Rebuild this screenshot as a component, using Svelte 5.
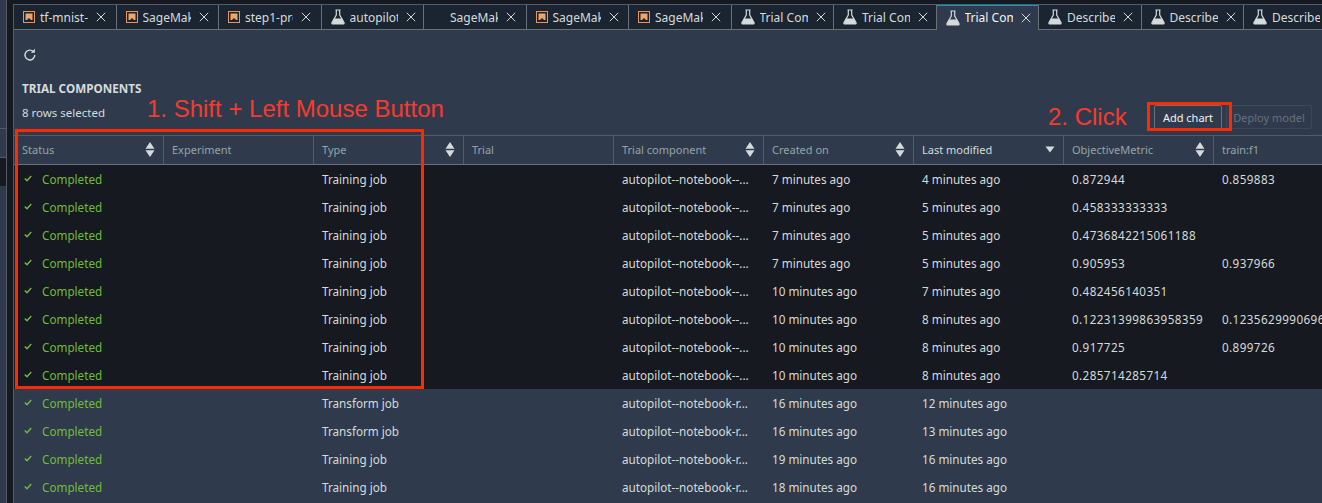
<script lang="ts">
  type Tab = { name: string; icon: "" | "sm" | "flask"; active?: boolean };
  const tabs: Tab[] = [
    { name: "tf-mnist-", icon: "sm" },
    { name: "SageMaker", icon: "sm" },
    { name: "step1-prepare", icon: "sm" },
    { name: "autopilot", icon: "flask" },
    { name: "SageMaker", icon: "" },
    { name: "SageMaker", icon: "sm" },
    { name: "SageMaker", icon: "sm" },
    { name: "Trial Component", icon: "flask" },
    { name: "Trial Component", icon: "flask" },
    { name: "Trial Component", icon: "flask", active: true },
    { name: "Describe", icon: "flask" },
    { name: "Describe", icon: "flask" },
    { name: "Describe", icon: "flask" },
  ];

  const cols = [
    { k: "Status", sort: "both" },
    { k: "Experiment", sort: "" },
    { k: "Type", sort: "both" },
    { k: "Trial", sort: "" },
    { k: "Trial component", sort: "both" },
    { k: "Created on", sort: "both" },
    { k: "Last modified", sort: "down" },
    { k: "ObjectiveMetric", sort: "both" },
    { k: "train:f1", sort: "" },
  ];

  const sel = "autopilot--notebook--...";
  const rest = "autopilot--notebook-r...";
  const rows = [
    ["Training job", sel, "7 minutes ago", "4 minutes ago", "0.872944", "0.859883", true],
    ["Training job", sel, "7 minutes ago", "5 minutes ago", "0.458333333333", "", true],
    ["Training job", sel, "7 minutes ago", "5 minutes ago", "0.4736842215061188", "", true],
    ["Training job", sel, "7 minutes ago", "5 minutes ago", "0.905953", "0.937966", true],
    ["Training job", sel, "10 minutes ago", "7 minutes ago", "0.482456140351", "", true],
    ["Training job", sel, "10 minutes ago", "8 minutes ago", "0.12231399863958359", "0.12356299906969", true],
    ["Training job", sel, "10 minutes ago", "8 minutes ago", "0.917725", "0.899726", true],
    ["Training job", sel, "10 minutes ago", "8 minutes ago", "0.285714285714", "", true],
    ["Transform job", rest, "16 minutes ago", "12 minutes ago", "", "", false],
    ["Transform job", rest, "16 minutes ago", "13 minutes ago", "", "", false],
    ["Training job", rest, "19 minutes ago", "16 minutes ago", "", "", false],
    ["Training job", rest, "18 minutes ago", "16 minutes ago", "", "", false],
  ];
</script>

<div class="page">
  <div class="strip">
    <div class="strip-head"></div>
    <div class="strip-row"></div>
  </div>
  <div class="gutter"></div>
  <div class="main">
    <div class="tabs">
      {#each tabs as t, i (i)}
        <div class="tab" class:active={t.active}>
          {#if t.icon === "sm"}
            <svg class="ic" width="12" height="12" viewBox="0 0 12 12">
              <rect x="0.5" y="0.5" width="11" height="11" fill="none" stroke="#e8935a" />
              <path d="M2.5 2.5h7v6.5h-1.6l-1-1.6h-1.8l-1 1.6H2.500z" fill="#f0a468" />
            </svg>
          {:else if t.icon === "flask"}
            <svg class="ic" width="14" height="16" viewBox="0 0 14 16">
              <path d="M4.500 1h5M5.300 1v5L1 13.500q-.5 1.500 1 1.500h10q1.500 0 1-1.500L8.700 6V1" fill="none" stroke="#d5dbdb" stroke-width="1.200" />
              <path d="M3.300 9.500h7.400l2.300 4.500q0 1-1 1H2q-1 0-1-1z" fill="#d5dbdb" />
            </svg>
          {:else}
            <span class="noic"></span>
          {/if}
          <span class="name">{t.name}</span>
          <svg class="x" width="10" height="10" viewBox="0 0 10 10">
            <path d="M.8.8l8.400 8.400M9.200.8L.8 9.200" stroke="#d5dbdb" stroke-width="1" fill="none" />
          </svg>
        </div>
      {/each}
    </div>

    <div class="toolbar">
      <svg width="14" height="14" viewBox="0 0 14 14">
        <path d="M11.800 7a4.900 4.900 0 1 1-1.500-3.500" fill="none" stroke="#d5dbdb" stroke-width="1.400" />
        <path d="M11.900 .8v4h-4z" fill="#d5dbdb" />
      </svg>
    </div>

    <div class="head">
      <div>
        <div class="title">TRIAL COMPONENTS</div>
        <div class="count">8 rows selected</div>
      </div>
      <div class="actions">
        <button class="btn">Add chart</button>
        <button class="btn off">Deploy model</button>
      </div>
    </div>

    <div class="thead">
      {#each cols as c (c.k)}
        <div class="th" class:on={c.k === "Last modified"}>
          <span>{c.k}</span>
          {#if c.sort === "both"}
            <svg width="10" height="15" viewBox="0 0 10 15">
              <path d="M5 0l4.500 6.800H.5zM5 15L.5 8.200h9z" fill="#d5dbdb" />
            </svg>
          {:else if c.sort === "down"}
            <svg width="10" height="7" viewBox="0 0 10 7"><path d="M.5 .5h9L5 6.500z" fill="#d5dbdb" /></svg>
          {/if}
        </div>
      {/each}
    </div>

    {#each rows as r, i (i)}
      <div class="tr" class:selected={r[6]}>
        <div class="td status">
          <svg width="8" height="7" viewBox="0 0 8 7"><path d="M.8 3.500l2.200 2.200L7.200 1" fill="none" stroke="#6fbb3c" stroke-width="1.500" /></svg>
          <span>Completed</span>
        </div>
        <div class="td"></div>
        <div class="td">{r[0]}</div>
        <div class="td"></div>
        <div class="td">{r[1]}</div>
        <div class="td">{r[2]}</div>
        <div class="td">{r[3]}</div>
        <div class="td num">{r[4]}</div>
        <div class="td num">{r[5]}</div>
      </div>
    {/each}
  </div>

  <!-- аннотации поверх скриншота -->
  <div class="mark m1"></div>
  <div class="mark m2"></div>
  <div class="note n1">1. Shift + Left Mouse Button</div>
  <div class="note n2">2. Click</div>
</div>

<style>
  :global(body) {
    margin: 0;
    background: #16191f;
  }
  .page {
    position: relative;
    display: flex;
    width: 1322px;
    height: 503px;
    overflow: hidden;
    background: #16191f;
    font-family: "Noto Sans", "Open Sans", sans-serif;
    font-size: 11px;
    color: #d5dbdb;
  }
  .strip {
    width: 6px;
    flex: none;
    background: #2f3b4c;
    border-right: 1px solid #545b64;
  }
  .strip-head {
    box-sizing: border-box;
    margin-top: 128px;
    height: 30px;
    border-top: 1px solid #545b64;
    border-bottom: 1px solid #545b64;
  }
  .strip-row {
    height: 28px;
    background: #16191f;
  }
  .gutter {
    width: 6px;
    flex: none;
  }
  .main {
    flex: none;
    width: 1309px;
    margin-top: 4px;
    border-left: 1px solid #545b64;
    background: #2f3b4c;
  }
  .tabs {
    display: grid;
    grid-template-columns: repeat(13, 102.5px);
    box-sizing: border-box;
    height: 26px;
    border-top: 1px solid #545b64;
    border-bottom: 1px solid #687078;
    background: #1b2531;
  }
  .tab {
    display: flex;
    align-items: center;
    box-sizing: border-box;
    height: 24px;
    padding-left: 9px;
    border-right: 1px solid #687078;
    font-size: 12px;
    overflow: hidden;
    position: relative;
  }
  .tab.active {
    background: #2f3b4c;
    color: #f2f3f3;
    height: 25px;
    box-shadow: inset 0 1px 0 #00a1c9;
    border-left: 1px solid #687078;
    margin-left: -1px;
  }
  .ic {
    flex: none;
    margin-right: 5px;
  }
  .noic {
    flex: none;
    width: 17px;
  }
  .name {
    flex: none;
    width: 48px;
    overflow: hidden;
    white-space: nowrap;
  }
  .x {
    flex: none;
    margin-left: 8px;
  }
  .toolbar {
    display: flex;
    align-items: center;
    height: 50px;
    padding-left: 9px;
  }
  .head {
    display: flex;
    justify-content: space-between;
    height: 55px;
    box-sizing: border-box;
    padding: 0 11px 6px 8px;
  }
  .title {
    font-size: 11.7px;
    font-weight: 700;
    color: #d5dbdb;
    line-height: 16px;
  }
  .count {
    margin-top: 10px;
    line-height: 14px;
    font-size: 11.5px;
    color: #d5dbdb;
  }
  .actions {
    display: flex;
    align-self: flex-end;
    gap: 4px;
  }
  .btn {
    height: 24px;
    padding: 0;
    width: 68px;
    border: 1px solid #687078;
    border-radius: 2px;
    background: transparent;
    color: #f2f3f3;
    font: inherit;
    font-size: 11px;
  }
  .btn.off {
    width: 86px;
    border-color: #414750;
    color: #687078;
  }
  .thead {
    display: grid;
    grid-template-columns: repeat(9, 150px);
    box-sizing: border-box;
    height: 30px;
    border-top: 1px solid #545b64;
    border-bottom: 1px solid #687078;
  }
  .th {
    display: flex;
    align-items: center;
    justify-content: space-between;
    box-sizing: border-box;
    padding: 0 8px 1px 8px;
    border-right: 1px solid #545b64;
    color: #95a5a6;
    font-size: 11px;
  }
  .th.on {
    color: #d5dbdb;
  }
  .tr {
    display: grid;
    grid-template-columns: repeat(9, 150px);
    box-sizing: border-box;
    height: 28px;
    padding-bottom: 1px;
    align-items: center;
  }
  .tr.selected {
    background: #16191f;
  }
  .td {
    padding-left: 8px;
    font-size: 11.7px;
    white-space: nowrap;
    overflow: hidden;
    color: #d5dbdb;
  }
  .num {
    letter-spacing: 0.4px;
  }
  .status {
    display: flex;
    align-items: center;
    gap: 10px;
    padding-left: 10px;
  }
  .status span {
    color: #6fbb3c;
  }
  .mark {
    position: absolute;
    box-sizing: border-box;
    border: 3px solid #ff2a00;
  }
  .m1 {
    left: 15px;
    top: 129px;
    width: 409px;
    height: 260px;
  }
  .m2 {
    left: 1147px;
    top: 102px;
    width: 85px;
    height: 29px;
  }
  .note {
    position: absolute;
    font-family: "Liberation Sans", sans-serif;
    font-size: 24px;
    line-height: 26px;
    color: #f53b2e;
    white-space: nowrap;
  }
  .n1 {
    left: 147px;
    top: 96px;
  }
  .n2 {
    left: 1048px;
    top: 104px;
  }
</style>
